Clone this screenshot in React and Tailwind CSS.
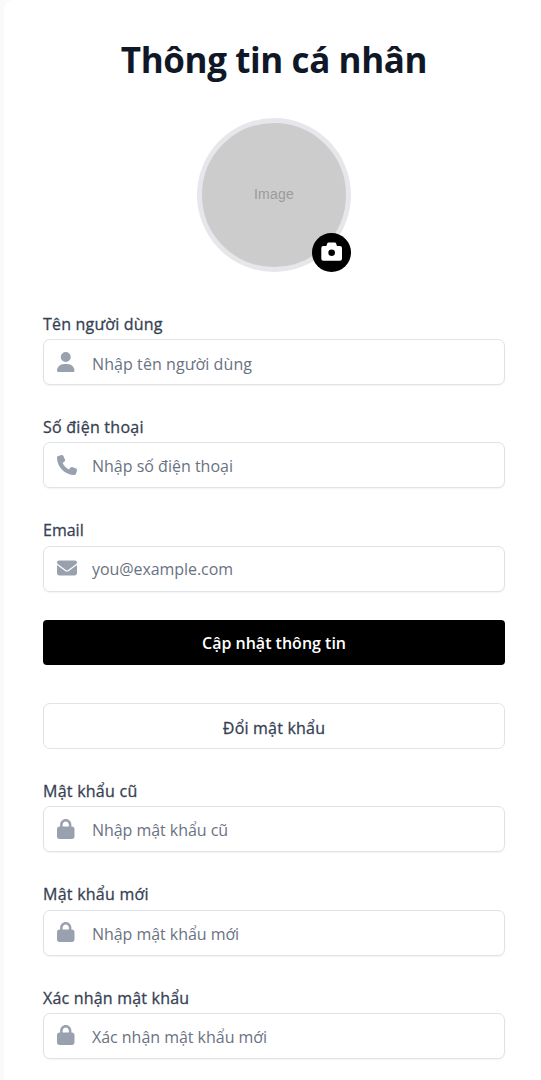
import React from 'react';
import { FaEnvelope, FaLock, FaPhone, FaUser } from 'react-icons/fa6';

function CameraIcon() {
  return (
    <svg viewBox="0 0 39 39" className="h-[39px] w-[39px]" aria-hidden="true">
      <path
        fill="currentColor"
        fillRule="evenodd"
        d="M11.3 13H14.3L15.2 10.5Q15.5 9.6 16.5 9.6H22.8Q23.8 9.6 24.1 10.5L25 13H28Q30 13 30 15V25.7Q30 27.7 28 27.7H11.3Q9.3 27.7 9.3 25.7V15Q9.3 13 11.3 13ZM19.65 16.4a3.3 3.3 0 1 0 0 6.6a3.3 3.3 0 1 0 0-6.6Z"
      />
    </svg>
  );
}

function Field({ label, labelClass, placeholder, textClass, Icon, type = 'text' }) {
  return (
    <label className="block h-[73.2px]">
      <span className={`block h-[27.2px] whitespace-nowrap text-[16px] leading-[24px] font-medium text-gray-700 [-webkit-text-stroke:0.3px_currentColor] ${labelClass}`}>{label}</span>
      <span className="flex h-[46px] items-center rounded-[7px] border-[1.5px] border-[#dfe2e7] bg-white pl-[12.5px] shadow-xs">
        <span className="flex w-[35.5px] shrink-0 items-center text-gray-400">
          <Icon preserveAspectRatio="xMinYMid meet" className="-mt-px h-[20px] w-[20px]" />
        </span>
        <input
          type={type}
          placeholder={placeholder}
          className={`w-full min-w-0 bg-transparent text-[16px] leading-[24px] outline-none placeholder:text-gray-500 ${textClass}`}
        />
      </span>
    </label>
  );
}

export default function App() {
  return (
    <div className="h-[1080px] overflow-hidden bg-gray-50 pl-[4px] font-['Open_Sans','Noto_Sans',sans-serif]">
      <main className="h-[1100px] rounded-tl-[9px] bg-white pr-[36px] pl-[39px] pt-[36px]">
        <h1 className="h-[48px] text-center text-[35px] leading-[48px] font-bold tracking-[-0.4px] whitespace-nowrap text-gray-900">Thông tin cá nhân</h1>
        <div className="relative mx-auto mt-[34px] h-[154px] w-[154px]">
          <div className="flex h-full w-full items-center justify-center rounded-full border-[5px] border-gray-200 bg-[#cccccc] pb-[2px] font-['Liberation_Sans',Arial,sans-serif] text-[14px] tracking-[0.2px] text-[#9b9b9b]">
            Image
          </div>
          <button aria-label="Camera" className="absolute right-0 bottom-0 flex h-[39px] w-[39px] items-center justify-center rounded-full bg-black text-white">
            <CameraIcon />
          </button>
        </div>
        <form className="mt-[40px] flex flex-col gap-[30px]">
          <Field label="Tên người dùng" labelClass="tracking-[0.2px]" placeholder="Nhập tên người dùng" textClass="pt-[3px] tracking-[0.08px]" Icon={FaUser} />
          <Field label="Số điện thoại" labelClass="tracking-[0.25px]" placeholder="Nhập số điện thoại" textClass="pt-[2px]" Icon={FaPhone} />
          <Field label="Email" labelClass="" placeholder="you@example.com" textClass="pt-[1px] tracking-[-0.07px]" Icon={FaEnvelope} />
        </form>
        <button className="mt-[28.4px] block h-[45.5px] w-full rounded-[4px] bg-black pt-[1px] text-[16px] font-semibold text-white">Cập nhật thông tin</button>
        <button className="mt-[38px] block h-[46px] w-full rounded-[7px] border-[1.5px] border-[#dfe2e7] bg-white pt-[3px] text-[16px] font-medium tracking-[0.2px] text-gray-700 [-webkit-text-stroke:0.3px_currentColor]">Đổi mật khẩu</button>
        <form className="mt-[29.8px] flex flex-col gap-[30px]">
          <Field label="Mật khẩu cũ" labelClass="tracking-[0.25px]" placeholder="Nhập mật khẩu cũ" textClass="pt-[1px] tracking-[-0.05px]" Icon={FaLock} type="password" />
          <Field label="Mật khẩu mới" labelClass="tracking-[0.25px]" placeholder="Nhập mật khẩu mới" textClass="pt-[2px] tracking-[-0.05px]" Icon={FaLock} type="password" />
          <Field label="Xác nhận mật khẩu" labelClass="tracking-[0.2px]" placeholder="Xác nhận mật khẩu mới" textClass="pt-[2px] tracking-[-0.03px]" Icon={FaLock} type="password" />
        </form>
      </main>
    </div>
  );
}
